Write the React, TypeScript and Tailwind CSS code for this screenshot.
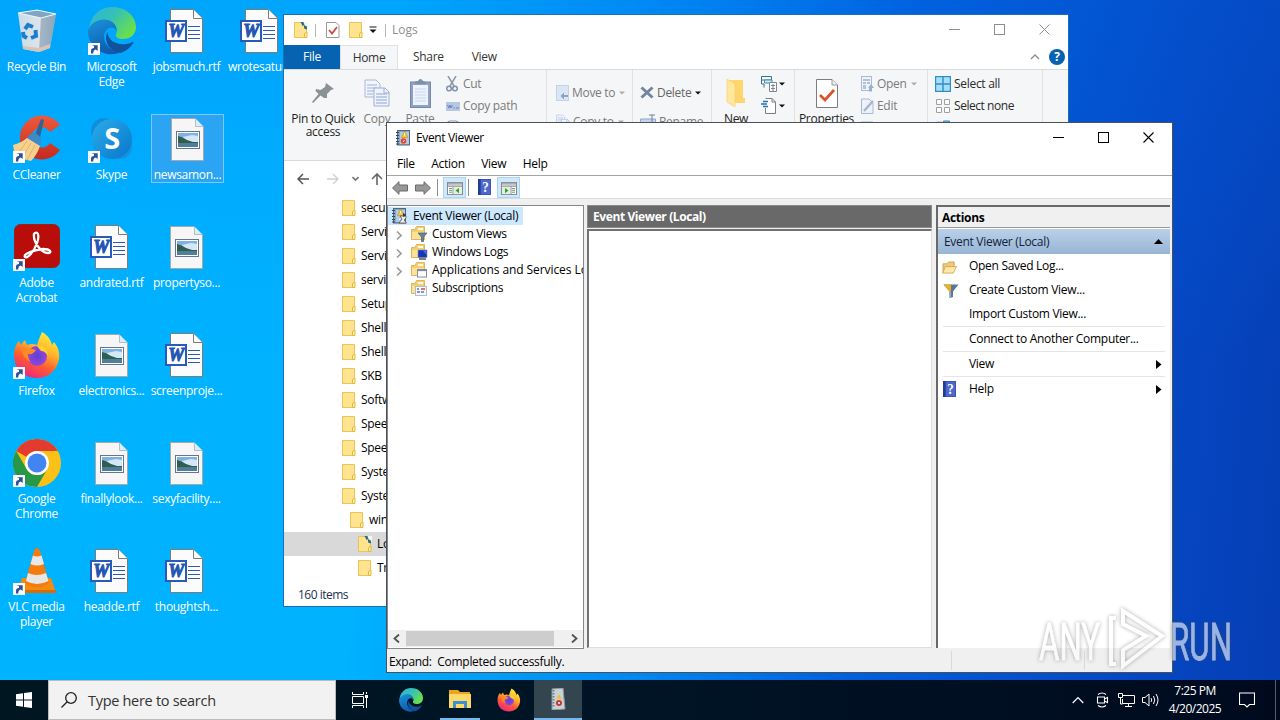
import React from "react";

/* ---------- Desktop icons ---------- */

function ShortcutBadge() {
  return (
    <svg className="absolute left-0 bottom-0 h-3 w-3" viewBox="0 0 12 12">
      <rect width="12" height="12" fill="#fafafa" />
      <path d="M3 10.5V7.8Q3 5 6 5V3L3.5 2.2H9.7V8L7.8 6.4Q5.2 7 5.2 10.5Z" fill="#2f4f96" />
    </svg>
  );
}

function RecycleIcon() {
  return (
    <svg viewBox="0 0 48 48" className="h-full w-full">
      <defs>
        <linearGradient id="bin" x1="0" x2="1">
          <stop offset="0" stopColor="#c9dcea" />
          <stop offset=".6" stopColor="#dfe4e8" />
          <stop offset="1" stopColor="#8fa9bf" />
        </linearGradient>
      </defs>
      <path d="M5 6L24 3L43 7L37 41L26 45L10 42Z" fill="url(#bin)" />
      <path d="M28 10L43 7L37 41L26 45Z" fill="#8ea6ba" opacity=".75" />
      <path d="M5 6L24 3L43 7L28 11Z" fill="#7fa5c2" />
      <path d="M5 6L24 3L43 7L28 11Z" fill="none" stroke="#eef6fb" strokeWidth="1.2" />
      <path d="M10 39L26 41L37 37L37 41L26 45L10 42Z" fill="#d9c4b8" />
      <g fill="none" stroke="#1b7fd0" strokeWidth="4">
        <path d="M12 22L15 18L20 20" />
        <path d="M22.5 23L23 29L18 31" />
        <path d="M14 31L10.500 29L10 25" />
      </g>
    </svg>
  );
}

function EdgeIcon({ id }: { id: string }) {
  return (
    <svg viewBox="0 0 48 48" className="h-full w-full">
      <defs>
        <linearGradient id={id + "a"} x1="0" y1="0" x2="1" y2=".6">
          <stop offset="0" stopColor="#2fb5e0" />
          <stop offset=".5" stopColor="#35c1b5" />
          <stop offset="1" stopColor="#6ae04a" />
        </linearGradient>
        <linearGradient id={id + "b"} x1="0" y1="0" x2=".4" y2="1">
          <stop offset="0" stopColor="#1a94dc" />
          <stop offset="1" stopColor="#0f5cae" />
        </linearGradient>
      </defs>
      <path d="M1 23C2 9 12 0 24 0C39 0 48 10 48 20C48 28 42 32 35 32C30 32 27 30 28 27C30 24 29 17 22 14C14 12 5 15 1 23Z" fill={"url(#" + id + "a)"} />
      <path d="M0 24C3 14 13 11 20 13C26 15 29 19 28.500 24C26 18 17 20 16 29C16 38 23 44 31 46C16 51 0 41 0 24Z" fill={"url(#" + id + "b)"} />
      <path d="M19.500 25C15 34 22 46 33 46C38 44 42 41 45 36.500C46 35 45 34.500 43.500 35.500C34 40 20 36 19.500 25Z" fill="#11529d" />
    </svg>
  );
}

function CCleanerIcon() {
  return (
    <svg viewBox="0 0 48 48" className="h-full w-full">
      <defs>
        <linearGradient id="cc" x1="0" y1="0" x2="0" y2="1">
          <stop offset="0" stopColor="#ee5a3c" />
          <stop offset="1" stopColor="#c42a1e" />
        </linearGradient>
      </defs>
      <path d="M47 10A22 22 0 1 0 47 35L37 28A10 10 0 1 1 37 17Z" fill="url(#cc)" />
      <path d="M31 5L27 22L22 20L28 4Z" fill="#2b6496" />
      <path d="M14 23Q18 16 24 19Q30 23 27 30L17 29Z" fill="#3d8ac4" />
      <path d="M14 23L27 31Q24 40 18 46L2 42L0 30Q8 28 14 23Z" fill="#f6d08e" />
      <path d="M14 26L4 40M18 28L9 43M22 30L14 45" stroke="#e3b36c" fill="none" />
    </svg>
  );
}

function SkypeIcon() {
  return (
    <svg viewBox="0 0 48 48" className="h-full w-full">
      <defs>
        <linearGradient id="sk" x1="0" y1="0" x2="1" y2="1">
          <stop offset="0" stopColor="#2badea" />
          <stop offset="1" stopColor="#0776ca" />
        </linearGradient>
      </defs>
      <circle cx="16" cy="16" r="13" fill="#118edb" />
      <circle cx="32" cy="32" r="12" fill="#1591de" />
      <circle cx="24" cy="24" r="20" fill="url(#sk)" />
      <text x="24" y="34" textAnchor="middle" fontFamily="Open Sans, sans-serif" fontWeight="700" fontSize="29" fill="#fff">S</text>
    </svg>
  );
}

function AcrobatIcon() {
  return (
    <svg viewBox="0 0 48 48" className="h-full w-full">
      <rect x="1.500" y="1.500" width="45" height="43" rx="6" fill="#b80d08" stroke="#9b2019" />
      <path d="M22 10C26 8 26 15 24 20C21 29 14 36 12 34C10 31 20 27 30 26C38 26 39 30 35 30C28 30 20 19 21 11Z" fill="none" stroke="#fff" strokeWidth="2.300" />
    </svg>
  );
}

function FirefoxIcon({ id }: { id: string }) {
  return (
    <svg viewBox="0 0 48 48" className="h-full w-full">
      <defs>
        <linearGradient id={id + "a"} x1=".75" y1="0" x2=".25" y2="1">
          <stop offset="0" stopColor="#fff03f" />
          <stop offset=".35" stopColor="#ffb52b" />
          <stop offset=".65" stopColor="#ff5a31" />
          <stop offset="1" stopColor="#e9218a" />
        </linearGradient>
        <radialGradient id={id + "b"}>
          <stop offset="0" stopColor="#5b3fd6" />
          <stop offset="1" stopColor="#9846d4" />
        </radialGradient>
      </defs>
      <path d="M29 1C36 5 38 10 39 14L41 11C45 16 47 21 46 28C44 40 35 47 24 47C11 47 1 38 1 24C1 18 3 13 6 10L8 14Q9 11 12 9L14 14Q19 12 24 14Q26 7 29 1Z" fill={"url(#" + id + "a)"} />
      <circle cx="24" cy="25" r="10" fill={"url(#" + id + "b)"} />
      <path d="M9 17Q15 16 23 19Q20 24 15 23Q15 28 18 31Q9 28 9 17Z" fill="#ff8a22" />
      <path d="M24 15Q34 13 35 25Q32 20 28 20Z" fill="#ffd02d" />
    </svg>
  );
}

function ChromeIcon() {
  return (
    <svg viewBox="0 0 48 48" className="h-full w-full">
      <circle cx="24" cy="24" r="24" fill="#fbc116" />
      <path d="M3.200 12A24 24 0 0 1 44.800 12H24A12 12 0 0 0 13.600 18Z" fill="#e33b2e" />
      <path d="M3.200 12A24 24 0 0 0 24 48L34.400 30A12 12 0 0 1 13.600 30Z" fill="#279847" />
      <circle cx="24" cy="24" r="12" fill="#fff" />
      <circle cx="24" cy="24" r="9.500" fill="#4285f0" />
    </svg>
  );
}

function VlcIcon() {
  return (
    <svg viewBox="0 0 48 48" className="h-full w-full">
      <path d="M9 31H38L43 46H5Z" fill="#f58a12" />
      <path d="M5 43L43 43L43 46H5Z" fill="#d96c06" />
      <path d="M24 1Q26 1 27 4L36 36Q24 45 12 36L21 4Q22 1 24 1Z" fill="#f47b0c" />
      <path d="M20 8.500Q24 10.500 28.500 8.500L31 17Q24 20 17.500 17Z" fill="#e8e8e8" />
      <path d="M15 26Q24 30 33 26L35.500 34Q24 40 13 34Z" fill="#e6e6e6" />
    </svg>
  );
}

function WordDocIcon() {
  return (
    <svg viewBox="3 0 48 48" className="h-full w-full">
      <path d="M10.500 2.500H33.500L42.500 11.500V45.500H10.500Z" fill="#fbfbfb" stroke="#7c7c7c" />
      <path d="M33.500 2.500V11.500H42.500" fill="#fff" stroke="#7c7c7c" />
      <path d="M28 19.500H40M28 23.500H40M28 27.500H40M28 31.500H40" stroke="#2f5bb0" strokeWidth="1.200" />
      <rect x="6" y="14" width="20" height="20" fill="#fff" stroke="#2a5ab8" strokeWidth="2" />
      <text x="16" y="30" textAnchor="middle" fontFamily="Liberation Serif, serif" fontStyle="italic" fontWeight="700" fontSize="18" fill="#2355b4" stroke="#2355b4" strokeWidth="1">W</text>
    </svg>
  );
}

function ImageDocIcon() {
  return (
    <svg viewBox="3 0 48 48" className="h-full w-full">
      <path d="M10.500 3.500H33.500L42.500 12.500V45.500H10.500Z" fill="#f6f6f7" stroke="#a8a8a8" />
      <path d="M34.500 3.500V11.500H42.500" fill="#dcecf8" stroke="#b4bcc4" />
      <rect x="15.500" y="16.500" width="23" height="17" fill="#fff" stroke="#667689" />
      <rect x="17" y="18" width="20" height="14" fill="#7fb2e4" />
      <path d="M22 22L31 20L37 21V27H22Z" fill="#d5e7f5" />
      <path d="M17 21Q22 22 26 25L32 27H37V29H17Z" fill="#2f5f4c" />
      <path d="M17 28H37V32H17Z" fill="#4f7d9c" />
    </svg>
  );
}

type Item = { label: string[]; icon: React.ReactNode; link?: boolean; selected?: boolean };

const items: Item[] = [
  { label: ["Recycle Bin"], icon: <RecycleIcon /> },
  { label: ["CCleaner"], icon: <CCleanerIcon />, link: true },
  { label: ["Adobe", "Acrobat"], icon: <AcrobatIcon />, link: true },
  { label: ["Firefox"], icon: <FirefoxIcon id="ffd" />, link: true },
  { label: ["Google", "Chrome"], icon: <ChromeIcon />, link: true },
  { label: ["VLC media", "player"], icon: <VlcIcon />, link: true },
  { label: ["Microsoft", "Edge"], icon: <EdgeIcon id="edd" />, link: true },
  { label: ["Skype"], icon: <SkypeIcon />, link: true },
  { label: ["andrated.rtf"], icon: <WordDocIcon /> },
  { label: ["electronics..."], icon: <ImageDocIcon /> },
  { label: ["finallylook..."], icon: <ImageDocIcon /> },
  { label: ["headde.rtf"], icon: <WordDocIcon /> },
  { label: ["jobsmuch.rtf"], icon: <WordDocIcon /> },
  { label: ["newsamon..."], icon: <ImageDocIcon />, selected: true },
  { label: ["propertyso..."], icon: <ImageDocIcon /> },
  { label: ["screenproje..."], icon: <WordDocIcon /> },
  { label: ["sexyfacility...."], icon: <ImageDocIcon /> },
  { label: ["thoughtsh..."], icon: <WordDocIcon /> },
  { label: ["wrotesatur..."], icon: <WordDocIcon /> },
];

function Desktop() {
  return (
    <div className="grid w-[300px] grid-flow-col grid-cols-[repeat(4,75px)] grid-rows-[repeat(6,108px)] pt-1.5">
      {items.map((it) => (
        <div key={it.label[0]} className={it.selected ? "ml-px h-[69px] w-[73px] border border-[#7cc8fb] bg-[#2ba5f3]" : "h-[90px] w-[73px] border border-transparent"}>
          <div className="relative mx-auto h-12 w-12">
            {it.icon}
            {it.link && <ShortcutBadge />}
          </div>
          <div className="-mx-2 mt-1 text-center text-[12px] leading-[15px] text-white">
            {it.label.map((l) => (
              <div key={l} className="whitespace-nowrap">{l}</div>
            ))}
          </div>
        </div>
      ))}
    </div>
  );
}

/* ---------- Small shared icons ---------- */

function FolderIcon({ open }: { open?: boolean }) {
  return (
    <svg className="h-4 w-[14px] shrink-0" viewBox="0 0 14 16">
      <path d="M.5.500H12.500V15.500H.5Z" fill="#ffe38f" stroke="#e9c558" />
      <path d="M10.500 15.500V12L12 10H13V15.500Z" fill="#fff0a8" stroke="#e3b83a" />
      {open && (
        <>
          <path d="M8 0H14V6L11 5Z" fill="#f6f6ee" />
          <path d="M6.500 0H9.500L10.500 3L8.500 4ZM10 3L13 4.500V7.500L10 6.500Z" fill="#2d7181" />
        </>
      )}
    </svg>
  );
}

function Caret({ light }: { light?: boolean }) {
  return (
    <svg className="h-1 w-[6px] shrink-0" viewBox="0 0 6 4">
      <path d="M0 .5H6L3 3.500Z" fill={light ? "#aaaaaa" : "#111"} />
    </svg>
  );
}

function HelpBook() {
  return (
    <svg className="h-4 w-[13px] shrink-0" viewBox="0 0 14 16" preserveAspectRatio="none">
      <rect width="14" height="16" fill="#3a54b8" />
      <rect width="3" height="16" fill="#253c96" />
      <rect x="3" y="1" width="10" height="14" fill="#4d68cc" />
      <text x="8" y="13" textAnchor="middle" fontFamily="Liberation Serif, serif" fontWeight="700" fontSize="14" fill="#fff">?</text>
    </svg>
  );
}

function EventIcon({ globe }: { globe?: boolean }) {
  return (
    <svg className="h-4 w-4 shrink-0" viewBox="0 0 16 16">
      <rect x="1.500" y=".5" width="12" height="14.500" fill="#86a6d2" stroke="#53657f" />
      <rect x="4" y="2" width="9" height="12" fill="#b4c9e4" />
      <path d="M0 2.500H3M0 5.500H3M0 8.500H3M0 11.500H3M0 14H3" stroke="#39455a" strokeWidth="1.200" />
      <path d="M8.500 1L12 7.500H5.500Z" fill="#f8cc28" stroke="#b98b12" strokeWidth=".5" />
      {globe ? (
        <>
          <path d="M8 8H14V10L12 12L14.500 15H7L10 11Z" fill="#eee" stroke="#444" strokeWidth=".7" />
          <path d="M11 5L14.500 7L11 9Z" fill="#303846" />
        </>
      ) : (
        <circle cx="7.500" cy="11" r="2.800" fill="#e2472c" />
      )}
      <path d="M8.500 3V5.500M7 12L8.500 10" stroke="#fff" strokeWidth=".9" />
    </svg>
  );
}

/* ---------- Explorer window ---------- */

function BigButton({ icon, label, cls }: { icon: React.ReactNode; label: string[]; cls: string }) {
  return (
    <div className={"flex shrink-0 flex-col items-center " + cls}>
      <div className="flex h-[42px] w-full items-center justify-center pt-2.5 pb-1.5">{icon}</div>
      {label.map((l) => (
        <div key={l} className="whitespace-nowrap leading-[13px]">{l}</div>
      ))}
    </div>
  );
}

function Row({ icon, label, caret, cls }: { icon: React.ReactNode; label?: string; caret?: "light" | "dark"; cls: string }) {
  return (
    <div className={"flex items-center whitespace-nowrap " + cls}>
      {icon}
      {label && <span className="ml-[3px]">{label}</span>}
      {caret && <span className="ml-1 flex items-center"><Caret light={caret === "light"} /></span>}
    </div>
  );
}

function PagesIcon({ small }: { small?: boolean }) {
  return (
    <svg className={small ? "h-4 w-[14px]" : "h-[28px] w-[26px] shrink-0"} viewBox="0 0 26 28">
      <path d="M1 1H12L16 5V18H1Z" fill="#f1f5fc" stroke="#a9b8d8" />
      <path d="M3 6H13M3 9H13M3 12H13M3 15H9" stroke="#b9c8e6" strokeWidth="1.300" />
      <path d="M10 9H21L25 13V27H10Z" fill="#eef3fc" stroke="#9fafd2" />
      <path d="M12 15H23M12 18H23M12 21H23M12 24H23" stroke="#afc0e2" strokeWidth="1.300" />
      <path d="M20 9V14H25" fill="none" stroke="#9fafd2" />
    </svg>
  );
}

function Ribbon() {
  return (
    <div className="flex h-[92px] overflow-hidden border-t border-b border-[#d9dadb] bg-[#f5f6f7] text-[12px] text-[#7b7b7b]">
      <div className="flex h-full w-[263px] shrink-0 border-r border-[#e1e2e3]">
        <BigButton cls="w-[78px] text-[#1e1e1e]" label={["Pin to Quick", "access"]} icon={
          <svg className="h-[20px] w-[22px]" viewBox="0 0 22 20">
            <path d="M14 0L22 6L19 7L15 11L15 15L12 15L8.500 12.500L1 20L0 19L6.500 11L3.500 8L4 6L8.500 7L13 4Z" fill="#8b9296" />
          </svg>
        } />
        <BigButton cls="w-[30px]" label={["Copy"]} icon={<PagesIcon />} />
        <BigButton cls="ml-2 w-10" label={["Paste"]} icon={
          <svg className="h-[29px] w-[21px] shrink-0" viewBox="0 0 21 29">
            <rect x=".5" y="3" width="20" height="25.500" fill="#8fa2c4" stroke="#7588aa" />
            <rect x="3" y="6" width="15" height="20" fill="#edf3fc" />
            <path d="M5 5V3Q5 2 8 2Q9 0 10.500 0Q12 0 13 2Q16 2 16 5Z" fill="#7e8fac" />
            <path d="M5 10H16M5 13H16M5 16H16M5 19H16M5 22H16" stroke="#c7d6ee" />
          </svg>
        } />
        <div className="ml-1.5 pt-[3px]">
          <Row cls="h-[22px]" label="Cut" icon={
            <svg className="mr-0.5 h-4 w-3" viewBox="0 0 12 16">
              <path d="M2 0L8 10M10 0L4 10" stroke="#8d99aa" strokeWidth="1.500" />
              <circle cx="3" cy="12.500" r="2.300" fill="none" stroke="#7d8fae" strokeWidth="1.500" />
              <circle cx="9" cy="12.500" r="2.300" fill="none" stroke="#7d8fae" strokeWidth="1.500" />
            </svg>
          } />
          <Row cls="h-[22px]" label="Copy path" icon={
            <svg className="h-[9px] w-[14px]" viewBox="0 0 14 9">
              <rect width="14" height="9" fill="#b4c8e5" />
              <path d="M1.500 3L3 6L4 3L5 6L6.500 3M7.500 6H9M10 6H13" stroke="#6e86b4" fill="none" />
            </svg>
          } />
          <Row cls="h-[22px]" label="Paste shortcut" icon={
            <svg className="h-4 w-[14px]" viewBox="0 0 14 16"><rect x="1" y="1" width="12" height="14" rx="3" fill="#edf3fc" stroke="#8b9bb5" /></svg>
          } />
        </div>
      </div>
      <div className="w-[86px] shrink-0 border-r border-[#e1e2e3] pt-[8px] pl-[9px]">
        <Row cls="h-[29px]" label="Move to" caret="light" icon={
          <svg className="h-4 w-[13px]" viewBox="0 0 13 16">
            <rect x=".5" y=".5" width="12" height="15" fill="#dbe6f5" stroke="#c4d2e6" />
            <path d="M12 12H8V14.500L4.500 11L8 7.500V10H12Z" fill="#8ba3c8" />
          </svg>
        } />
        <Row cls="h-[29px]" label="Copy to" caret="light" icon={<PagesIcon small />} />
      </div>
      <div className="w-[79px] shrink-0 border-r border-[#e1e2e3] pt-[8px] pl-[7px]">
        <Row cls="h-[29px] text-[#666]" label="Delete" caret="dark" icon={
          <svg className="h-[13px] w-[14px]" viewBox="0 0 14 13">
            <path d="M1.500 1.500L12.500 11.500M12.500 1.500L1.500 11.500" stroke="#74859f" strokeWidth="3" />
          </svg>
        } />
        <Row cls="h-[29px]" label="Rename" icon={
          <svg className="h-4 w-4" viewBox="0 0 16 16">
            <path d="M.5 5H15.500V13H.5Z" fill="#c5d5eb" stroke="#93a7c7" />
            <path d="M9 1H15M12 1V15M9 15H15" stroke="#6d7f9c" />
          </svg>
        } />
      </div>
      <div className="flex w-[83px] shrink-0 border-r border-[#e1e2e3]">
        <BigButton cls="w-[48px] text-[#1e1e1e]" label={["New", "folder"]} icon={
          <svg className="h-[28px] w-[20px]" viewBox="0 0 20 28">
            <path d="M2 1H17V19H19V24H2Z" fill="#ffd66e" />
            <path d="M1 0L9 5V28L1 23Z" fill="#ffe79e" stroke="#f4cf66" strokeWidth=".6" />
          </svg>
        } />
        <div className="pt-[3px] pl-px">
          <Row cls="h-[22px]" caret="dark" icon={
            <svg className="-mr-0.5 h-4 w-4" viewBox="0 0 16 16">
              <path d="M.5.500H10.500V4H.5ZM.5 4V8H3V11.500" fill="none" stroke="#39718d" />
              <path d="M3.500 4H11V7H3.500Z" fill="#c6ebf8" stroke="#4f8bb0" />
              <path d="M8.500 6.500H15.500V15.500H8.500ZM10 9.500H14M10 12.500H14M12 8V15" fill="#fff" stroke="#7b8690" />
            </svg>
          } />
          <Row cls="h-[22px]" caret="dark" icon={
            <svg className="-mr-0.5 h-4 w-4" viewBox="0 0 16 16">
              <path d="M4.500.500H11L14.500 4V15.500H4.500V10" fill="#fff" stroke="#777f85" />
              <path d="M11 .5V4H14.500" fill="none" stroke="#777f85" />
              <path d="M2 3.500H7M0 6H6M2 8.500H7" stroke="#2670ae" strokeWidth="1.300" />
            </svg>
          } />
        </div>
      </div>
      <div className="flex w-[133px] shrink-0 border-r border-[#e1e2e3]">
        <BigButton cls="w-[63px] text-[#1e1e1e]" label={["Properties"]} icon={
          <svg className="h-[29px] w-[22px] shrink-0" viewBox="0 0 22 29">
            <path d="M.5.500H16L21.500 6V28.500H.5Z" fill="#fff" stroke="#7d7d7d" />
            <path d="M16 .5V6H21.500" fill="#eee" stroke="#999" />
            <path d="M4 16L9 21L18 11" fill="none" stroke="#dc5327" strokeWidth="2.800" />
          </svg>
        } />
        <div className="pt-[3px] pl-[3px]">
          <Row cls="h-[22px]" label="Open" caret="light" icon={
            <svg className="h-4 w-[13px]" viewBox="0 0 13 16">
              <rect x=".5" y=".5" width="10" height="14" fill="#eef3fa" stroke="#a9bad4" />
              <path d="M2 4H9M2 7H5M2 10H5M2 12H5M6 7H9" stroke="#7b8fb8" />
              <path d="M10 8L13 12H11V15.500H8V12H7Z" fill="#9aafd0" />
            </svg>
          } />
          <Row cls="h-[22px]" label="Edit" icon={
            <svg className="h-4 w-[13px]" viewBox="0 0 13 16">
              <path d="M.5 1H8L12 5V15.500H.5Z" fill="#edf2f9" stroke="#a9b8d1" />
              <path d="M3 13L12 3" stroke="#a2b3ce" strokeWidth="2.200" />
            </svg>
          } />
          <Row cls="h-[22px]" label="History" icon={<svg className="h-4 w-[13px]" viewBox="0 0 13 16"><rect y="1" width="12" height="14" fill="#c9d6e6" /></svg>} />
        </div>
      </div>
      <div className="w-[115px] shrink-0 border-r border-[#e1e2e3] pt-[3px] pl-[7px] text-[#2a2a2a]">
        <Row cls="h-[22px]" label="Select all" icon={
          <svg className="h-4 w-4" viewBox="0 0 16 16">
            <path d="M.5.500H15.500V15.500H.5ZM8 0V16M0 8H16" fill="#a9defa" stroke="#2c8fc8" strokeWidth="1.400" />
          </svg>
        } />
        <Row cls="h-[22px] tracking-[-0.45px]" label="Select none" icon={
          <svg className="h-4 w-4" viewBox="0 0 16 16">
            <path d="M1.500 1.500H6.500V6.500H1.500ZM9.500 1.500H14.500V6.500H9.500ZM1.500 9.500H6.500V14.500H1.500ZM9.500 9.500H14.500V14.500H9.500Z" fill="#fff" stroke="#a0a0a0" />
          </svg>
        } />
        <Row cls="h-[22px]" label="Invert" icon={
          <svg className="h-4 w-4" viewBox="0 0 16 16">
            <path d="M1.500 2H7V7H1.500Z" fill="#fff" stroke="#9fb4c6" />
            <path d="M8.500 1H14.500V7H8.500Z" fill="#6eb6e5" stroke="#2c8fc8" />
          </svg>
        } />
      </div>
    </div>
  );
}

const folders: { name: string; cls: string; open?: boolean }[] = [
  { name: "security", cls: "pl-[58px]" },
  { name: "ServiceProfiles", cls: "pl-[58px]" },
  { name: "ServiceState", cls: "pl-[58px]" },
  { name: "servicing", cls: "pl-[58px]" },
  { name: "Setup", cls: "pl-[58px]" },
  { name: "ShellComponents", cls: "pl-[58px]" },
  { name: "ShellExperiences", cls: "pl-[58px]" },
  { name: "SKB", cls: "pl-[58px]" },
  { name: "SoftwareDistribution", cls: "pl-[58px]" },
  { name: "Speech", cls: "pl-[58px]" },
  { name: "Speech_OneCore", cls: "pl-[58px]" },
  { name: "System", cls: "pl-[58px]" },
  { name: "System32", cls: "pl-[58px]" },
  { name: "winevt", cls: "pl-[66px]" },
  { name: "Logs", cls: "pl-[74px] bg-[#d9d9d9]", open: true },
  { name: "TraceFormat", cls: "pl-[74px]" },
];

function Explorer() {
  return (
    <section className="absolute top-[14px] left-[283px] flex h-[593px] w-[786px] flex-col overflow-hidden border border-[#1d6fb4] bg-white text-[12px]">
      <header className="flex h-[30px] shrink-0 items-center pl-[10px] text-[#8e8e8e]">
        <FolderIcon open />
        <div className="ml-[7px] h-[13px] w-px bg-[#b5b5b5]" />
        <svg className="ml-2.5 h-4 w-[14px]" viewBox="0 0 14 16">
          <path d="M.5.500H10L13 3.500V15.500H.5Z" fill="#fff" stroke="#999" />
          <path d="M3 8L6 11.500L11 5" fill="none" stroke="#cb4c3a" strokeWidth="1.800" />
        </svg>
        <span className="ml-[9px] flex"><FolderIcon /></span>
        <svg className="ml-1.5 h-[8px] w-[8px]" viewBox="0 0 8 8"><path d="M.5 1H7.500" stroke="#111" /><path d="M.5 3.500H7.500L4 7Z" fill="#111" /></svg>
        <div className="ml-[8px] h-[13px] w-px bg-[#b5b5b5]" />
        <span className="ml-[6px] tracking-normal">Logs</span>
        <div className="ml-auto flex items-center gap-[34px] pr-[18px] pb-px">
          <svg className="h-[11px] w-[11px]" viewBox="0 0 11 11"><path d="M0 5.500H11" stroke="#8d8d8d" /></svg>
          <svg className="h-[11px] w-[11px]" viewBox="0 0 11 11"><rect x=".5" y=".5" width="10" height="10" fill="none" stroke="#8d8d8d" /></svg>
          <svg className="h-[11px] w-[11px]" viewBox="0 0 11 11"><path d="M.5.500L10.500 10.500M10.500.500L.5 10.500" stroke="#8d8d8d" /></svg>
        </div>
      </header>
      <nav className="flex h-6 shrink-0 items-center text-[#333]">
        <span className="flex h-full w-14 items-center justify-center bg-[#0563b1] text-white">File</span>
        <span className="-mb-px flex h-[25px] w-[58px] items-center justify-center border-x border-t border-[#e0e1e2] bg-[#f5f6f7]">Home</span>
        <span className="ml-[15px]">Share</span>
        <span className="ml-7">View</span>
        <div className="ml-auto flex items-center gap-[9px] pr-[3px]">
          <svg className="h-2 w-[10px]" viewBox="0 0 10 8"><path d="M1 6L5 2L9 6" fill="none" stroke="#8d8d8d" strokeWidth="1.300" /></svg>
          <span className="flex h-4 w-4 items-center justify-center rounded-full bg-[#0563b1] text-[12px] font-bold text-white">?</span>
        </div>
      </nav>
      <Ribbon />
      <div className="flex h-[35px] shrink-0 items-center pl-[13px]">
        <svg className="h-3 w-3" viewBox="0 0 12 12"><path d="M12 6H1M6 1L1 6L6 11" fill="none" stroke="#555" strokeWidth="1.500" /></svg>
        <svg className="ml-[18px] h-3 w-3" viewBox="0 0 12 12"><path d="M0 6H11M6 1L11 6L6 11" fill="none" stroke="#cfcfcf" strokeWidth="1.300" /></svg>
        <svg className="ml-[13px] h-1.5 w-[7px]" viewBox="0 0 7 6"><path d="M.5 1L3.500 4L6.500 1" fill="none" stroke="#777" strokeWidth="1.600" /></svg>
        <svg className="ml-[12px] h-3 w-3" viewBox="0 0 12 12"><path d="M6 12V1M1 6L6 1L11 6" fill="none" stroke="#666" strokeWidth="1.600" /></svg>
      </div>
      <div className="w-[390px] flex-1 text-black">
        {folders.map((f) => (
          <div key={f.name} className={"flex h-6 items-center " + f.cls}>
            <FolderIcon open={f.open} />
            <span className="ml-[5px]">{f.name}</span>
          </div>
        ))}
      </div>
      <footer className="flex h-[24px] shrink-0 items-center pt-0.5 pl-[14px] tracking-[-0.5px] text-[#20314f]">160 items</footer>
    </section>
  );
}

/* ---------- Event Viewer window ---------- */

function PaneIcon({ flip }: { flip?: boolean }) {
  return (
    <svg className={flip ? "mt-0.5 h-[13px] w-4 -scale-x-100" : "mt-0.5 h-[13px] w-4"} viewBox="0 0 16 14" preserveAspectRatio="none">
      <rect x=".5" y=".5" width="15" height="13" fill="#fff" stroke="#84898c" />
      <path d="M1 2H15M1 4.500H15" stroke="#8c9194" strokeWidth="1.200" />
      <path d="M6 5V13" stroke="#84898c" />
      <path d="M2 7H5M2 9H5M2 11H5" stroke="#6c9a6c" />
      <rect x="7" y="5.500" width="8" height="7.500" fill="#e2f1dd" />
      <path d="M12 6.500V12L8.500 9.200Z" fill="#3c9b33" />
    </svg>
  );
}

function TreeFolder({ kind }: { kind: string }) {
  return (
    <svg className="h-4 w-[17px] shrink-0" viewBox="0 0 17 16">
      <path d="M.5 3.500H4L5.500.500H13.500V13.500H.5Z" fill="#f3d06d" stroke="#dcb562" />
      <path d="M1 6H13V13H1Z" fill="#fbe296" />
      <path d="M7 2H12V4H7Z" fill="#fffbe3" />
      {kind === "filter" && <path d="M7 7H16L12.500 11V15.500H10.500V11Z" fill="#68839c" stroke="#3f5b75" strokeWidth=".7" />}
      {kind === "monitor" && (
        <>
          <rect x="7" y="6" width="9" height="7.500" fill="#1536bb" stroke="#7f8db8" strokeWidth=".6" />
          <path d="M12 6.500L15.500 11V6.500Z" fill="#3f74ee" />
          <path d="M8 15H15" stroke="#555" strokeWidth="1.500" />
        </>
      )}
      {kind === "window" && (
        <>
          <rect x="6.500" y="7.500" width="9" height="7.500" fill="#fff" stroke="#8a8aa0" />
          <path d="M7 8.500H15" stroke="#7b8ca8" strokeWidth="1.300" />
        </>
      )}
      {kind === "sub" && (
        <>
          <rect x="4.500" y="6.500" width="11" height="9" fill="#f7f7fb" stroke="#b3bccb" />
          <path d="M6 9H8M6 12H9M10 12H13" stroke="#4a7fd0" strokeWidth="1.300" />
          <path d="M10 9H14" stroke="#d24b3a" strokeWidth="1.500" />
        </>
      )}
    </svg>
  );
}

const tree = [
  { name: "Custom Views", kind: "filter", expand: true, cls: "ml-1" },
  { name: "Windows Logs", kind: "monitor", expand: true, cls: "ml-1" },
  { name: "Applications and Services Logs", kind: "window", expand: true, cls: "ml-1 tracking-[-0.08px]" },
  { name: "Subscriptions", kind: "sub", expand: false, cls: "ml-1 tracking-[-0.35px]" },
];

function ActionRow({ icon, label, arrow, cls }: { icon?: React.ReactNode; label: string; arrow?: boolean; cls: string }) {
  return (
    <div className={"mx-[5px] flex items-center border-[#e5e5e5] " + cls}>
      <span className="flex w-[26px] shrink-0 items-center">{icon}</span>
      <span>{label}</span>
      {arrow && (
        <svg className="mr-[3px] ml-auto h-[9px] w-[6px]" viewBox="0 0 6 9"><path d="M0 0V9L5.500 4.500Z" fill="#000" /></svg>
      )}
    </div>
  );
}

function EventViewer() {
  return (
    <section className="absolute top-[122px] left-[386px] flex h-[551px] w-[787px] flex-col overflow-hidden border border-[#4c5158] bg-white text-[12px] text-black">
      <header className="flex h-[30px] shrink-0 items-center pl-[9px]">
        <EventIcon />
        <span className="ml-1 tracking-[-0.35px]">Event Viewer</span>
        <div className="ml-auto flex items-center gap-[34px] pr-[18px] pb-px">
          <svg className="h-[11px] w-[11px]" viewBox="0 0 11 11"><path d="M0 5.500H11" stroke="#000" /></svg>
          <svg className="h-[11px] w-[11px]" viewBox="0 0 11 11"><rect x=".5" y=".5" width="10" height="10" fill="none" stroke="#000" /></svg>
          <svg className="h-[11px] w-[11px]" viewBox="0 0 11 11"><path d="M.5.500L10.500 10.500M10.500.500L.5 10.500" stroke="#000" strokeWidth="1.100" /></svg>
        </div>
      </header>
      <nav className="flex h-[22px] shrink-0 items-center gap-[16.500px] pl-[10px]">
        <span>File</span>
        <span>Action</span>
        <span>View</span>
        <span>Help</span>
      </nav>
      <div className="flex h-[24px] shrink-0 items-center border-t border-b border-t-[#a5a5a5] border-b-[#dcdcdc] pl-[5px]">
        <svg className="mt-px h-[14px] w-4" viewBox="0 0 16 14"><path d="M.5 7L7 .7V4H15.500V10H7V13.300Z" fill="#989898" stroke="#696969" /></svg>
        <svg className="mt-px ml-[7px] h-[14px] w-4" viewBox="0 0 16 14"><path d="M15.500 7L9 .7V4H.5V10H9V13.300Z" fill="#989898" stroke="#696969" /></svg>
        <div className="ml-1.5 h-[17px] w-px bg-[#8d8d8d]" />
        <span className="ml-[5px] flex h-[21px] w-[23px] items-center justify-center border border-[#a7d6f8] bg-[#cfe8fb]"><PaneIcon /></span>
        <div className="ml-[2px] h-[17px] w-px bg-[#8d8d8d]" />
        <span className="ml-[9px] flex"><HelpBook /></span>
        <span className="ml-[6px] flex h-[21px] w-[23px] items-center justify-center border border-[#a7d6f8] bg-[#cfe8fb]"><PaneIcon flip /></span>
      </div>
      <div className="flex min-h-0 flex-1 gap-[3px] bg-[#f0f0f0] pt-[6px] pr-0.5">
        <div className="flex w-[197px] shrink-0 flex-col overflow-hidden border border-[#828790] bg-white">
          <div className="mt-px flex h-[18px] w-[135px] items-center bg-[#cce8ff] pl-[4px] whitespace-nowrap">
            <EventIcon globe />
            <span className="ml-[5px]">Event Viewer (Local)</span>
          </div>
          {tree.map((t) => (
            <div key={t.name} className="flex h-[18px] shrink-0 items-center pl-[8px] whitespace-nowrap">
              <svg className="mt-0.5 h-[9px] w-1.5 shrink-0" viewBox="0 0 6 9">{t.expand && <path d="M1 .5L5 4.500L1 8.500" fill="none" stroke="#9c9c9c" strokeWidth="1.600" />}</svg>
              <span className="ml-[9px] flex"><TreeFolder kind={t.kind} /></span>
              <span className={t.cls}>{t.name}</span>
            </div>
          ))}
          <div className="mt-auto mb-px flex h-[17px] items-center bg-[#f0f0f0] px-[5px]">
            <svg className="h-[9px] w-[7px]" viewBox="0 0 7 9"><path d="M6 .5L1.500 4.500L6 8.500" fill="none" stroke="#505050" strokeWidth="1.800" /></svg>
            <div className="ml-[6px] h-[15px] w-[148px] bg-[#cdcdcd]" />
            <svg className="ml-auto h-[9px] w-[7px]" viewBox="0 0 7 9"><path d="M1 .5L5.500 4.500L1 8.500" fill="none" stroke="#505050" strokeWidth="1.800" /></svg>
          </div>
        </div>
        <div className="flex w-[345px] shrink-0 flex-col pb-px">
          <div className="flex h-[23px] items-center border border-[#8a8a8a] bg-[#696969] pt-px pl-[5px] font-bold tracking-[-0.4px] text-white">Event Viewer (Local)</div>
          <div className="mt-px flex-1 border border-t-2 border-l-2 border-[#dedede] border-t-[#727272] border-l-[#727272] bg-white" />
        </div>
        <div className="ml-px flex flex-1 flex-col border-t-2 border-l-2 border-[#696969] bg-white mb-px">
          <div className="flex h-[21px] items-center border-b border-[#9a9a9a] bg-[#f0f0f0] pt-0.5 pl-1 font-bold">Actions</div>
          <div className="mt-px flex h-[25px] items-center justify-between bg-linear-to-b from-[#bad0e8] to-[#98b5d5] pr-[7px] pl-[6px] text-[#10233c]">
            <span>Event Viewer (Local)</span>
            <svg className="h-[5px] w-[9px]" viewBox="0 0 9 5"><path d="M0 5H9L4.500 0Z" fill="#000" /></svg>
          </div>
          <ActionRow cls="h-6" label="Open Saved Log..." icon={
            <svg className="mt-0.5 -ml-px h-[13px] w-[15px]" viewBox="0 0 16 14">
              <path d="M1 13V3H5L7 1H13V6H4Z" fill="#edca73" stroke="#cfa252" />
              <path d="M3.500 6H15.500L12 13H.8Z" fill="#ffe8a8" stroke="#d4a957" />
            </svg>
          } />
          <ActionRow cls="h-6" label="Create Custom View..." icon={
            <svg className="mt-0.5 h-[14px] w-4" viewBox="0 0 16 14">
              <path d="M.5.500H15.500L10 7.500V13L6.500 14V7.500Z" fill="#577899" />
              <path d="M.5.500H8V7.500H6.500Z" fill="#e9b022" />
              <path d="M8 8H6.500V13.500L8 13Z" fill="#a0aab4" />
            </svg>
          } />
          <ActionRow cls="h-[24px]" label="Import Custom View..." />
          <ActionRow cls="h-[25px] border-t" label="Connect to Another Computer..." />
          <ActionRow cls="h-[25px] border-t" label="View" arrow />
          <ActionRow cls="h-[25px] border-t" label="Help" arrow icon={<HelpBook />} />
        </div>
      </div>
      <footer className="flex h-[23px] shrink-0 items-center bg-[#f0f0f0] pl-[2px]">
        <span className="pt-0.5 whitespace-pre">Expand:  Completed successfully.</span>
        <div className="ml-auto h-[19px] w-px bg-[#d9d9d9]" />
        <div className="ml-[132px] h-[19px] w-px bg-[#d9d9d9]" />
        <div className="w-[87px]" />
      </footer>
    </section>
  );
}

/* ---------- Taskbar ---------- */

function Taskbar() {
  return (
    <footer className="absolute bottom-0 left-0 flex h-10 w-full items-center bg-linear-to-r from-[#001721] via-[#001426] to-[#000a1e] text-white">
      <div className="flex h-full w-12 items-center justify-center">
        <svg className="h-4 w-4" viewBox="0 0 16 16"><path d="M0 2.200L7 1.200V7.500H0ZM8 1L16 0V7.500H8ZM0 8.500H7V14.800L0 13.800ZM8 8.500H16V16L8 15Z" fill="#fff" /></svg>
      </div>
      <div className="flex h-full w-[288px] items-center border border-[#bcbcbc] bg-[#f2f2f2] pl-3 text-[#333]">
        <svg className="h-4 w-4" viewBox="0 0 16 16"><circle cx="10" cy="6" r="5.300" fill="none" stroke="#222" strokeWidth="1.300" /><path d="M6.200 9.800L.5 15.500" stroke="#222" strokeWidth="1.300" /></svg>
        <span className="mt-0.5 ml-[11px] text-[14.500px] tracking-[-0.3px]">Type here to search</span>
      </div>
      <div className="flex h-full w-12 items-center justify-center">
        <svg className="h-4 w-[17px]" viewBox="0 0 17 16">
          <path d="M.5 0V2.500H11.500V0M.5 16V13.500H11.500V16M.5 4.500H11.500V11.500H.5ZM14.500 0V2M14.500 6V16" fill="none" stroke="#fff" />
          <rect x="13" y="3" width="3" height="3" fill="#fff" />
        </svg>
      </div>
      <div className="ml-[3px] flex h-full w-12 items-center justify-center"><span className="h-6 w-6"><EdgeIcon id="edt" /></span></div>
      <div className="ml-[5px] flex h-full w-10 flex-col items-center border-b-2 border-[#76b9ed]">
        <svg className="mt-[10px] h-[19px] w-[22px]" viewBox="0 0 22 19">
          <path d="M0 0H9L11 2H21V17H0Z" fill="#e8a520" />
          <path d="M0 4H22V18H0Z" fill="#ffd968" />
          <path d="M4 18V11H18V18H15V14H7V18Z" fill="#3b90d2" />
        </svg>
      </div>
      <div className="flex h-full w-[54px] items-center justify-center pl-[3px]"><span className="h-6 w-6"><FirefoxIcon id="fft" /></span></div>
      <div className="flex h-full w-12 items-center justify-center border-b-2 border-[#76b9ed] bg-[#33454e]">
        <svg className="h-[22px] w-4" viewBox="0 0 16 22">
          <path d="M2 1L13 0L15 21L2 22Z" fill="#c9d2d8" stroke="#8c979f" />
          <path d="M3.500 2V20" stroke="#74818c" strokeWidth="2" strokeDasharray="1.500 1.500" />
          <path d="M9 6L12 11H6.500Z" fill="#f0c22e" />
          <circle cx="9" cy="15" r="3" fill="#c73831" />
          <circle cx="9" cy="15" r="1" fill="#fff" />
        </svg>
      </div>
      <div className="ml-auto flex h-full items-center">
        <svg className="h-2 w-3" viewBox="0 0 12 8"><path d="M.7 7L6 1.500L11.300 7" fill="none" stroke="#fff" strokeWidth="1.200" /></svg>
        <svg className="ml-[12px] h-4 w-[13px]" viewBox="0 0 13 16">
          <path d="M2 2.500Q6 -.5 10 2.500M2 13.500Q6 16.500 10 13.500M1.500 5H8.500V11H1.500ZM8.500 7L11.500 5.500V10.500L8.500 9" fill="none" stroke="#fff" strokeWidth="1.100" />
        </svg>
        <svg className="ml-[9px] h-[14px] w-[17px]" viewBox="0 0 17 14">
          <path d="M5 2.500H16.500V10.500H4.500V6M10.500 10.500V13.500M7 13.500H14M.5.500H4.500V4.500H.5ZM2.500 4.500V11H4.500" fill="none" stroke="#fff" />
        </svg>
        <svg className="ml-[7px] h-[14px] w-[18px]" viewBox="0 0 18 14">
          <path d="M.5 4.500H3L7 1V13L3 9.500H.5ZM9 5Q10.500 7 9 9M11.500 3Q14 7 11.500 11M14 1Q18 7 14 13" fill="none" stroke="#fff" />
        </svg>
        <div className="ml-[6px] w-[58px] text-center text-[12px] leading-[18px] tracking-[-0.5px] whitespace-nowrap">
          <div>7:25 PM</div>
          <div>4/20/2025</div>
        </div>
        <svg className="ml-[15px] h-4 w-4" viewBox="0 0 16 16"><path d="M.5 1H15.500V12.500H10.500L8 15L5.500 12.500H.5Z" fill="none" stroke="#fff" strokeWidth="1.100" /></svg>
        <div className="ml-5 h-full w-px bg-[#56606c]" />
        <div className="w-1" />
      </div>
    </footer>
  );
}

function Watermark() {
  return (
    <svg className="absolute top-[604px] left-[1030px] h-[72px] w-[212px] opacity-60 drop-shadow-[0_0_2px_rgba(70,70,70,0.75)]" viewBox="-4 0 212 72">
      <g fontFamily="Roboto, sans-serif" fontSize="51" fill="#fff" stroke="#fff" strokeWidth=".8" letterSpacing="0">
        <text x="5" y="55.500" textLength="61" lengthAdjust="spacingAndGlyphs">ANY</text>
        <text x="136" y="55.500" textLength="62" lengthAdjust="spacingAndGlyphs">RUN</text>
      </g>
      <g fill="none" stroke="#fff" strokeWidth="4">
        <path d="M89 7L128 32L89 62V46L112 32L89 20Z" />
        <path d="M82 14H77V60H82" />
      </g>
    </svg>
  );
}

export default function App() {
  return (
    <main className="relative h-[720px] w-[1280px] overflow-hidden bg-[linear-gradient(180deg,rgba(0,110,240,0.2),rgba(0,150,255,0)_50%),linear-gradient(95deg,#00b3ff_0%,#00b2ff_30%,#0090f5_48%,#005fdc_68%,#0548c4_88%,#053eb4_100%)] font-['Open_Sans',sans-serif] tracking-[-0.3px]">
      <Desktop />
      <Explorer />
      <EventViewer />
      <Taskbar />
      <Watermark />
    </main>
  );
}
